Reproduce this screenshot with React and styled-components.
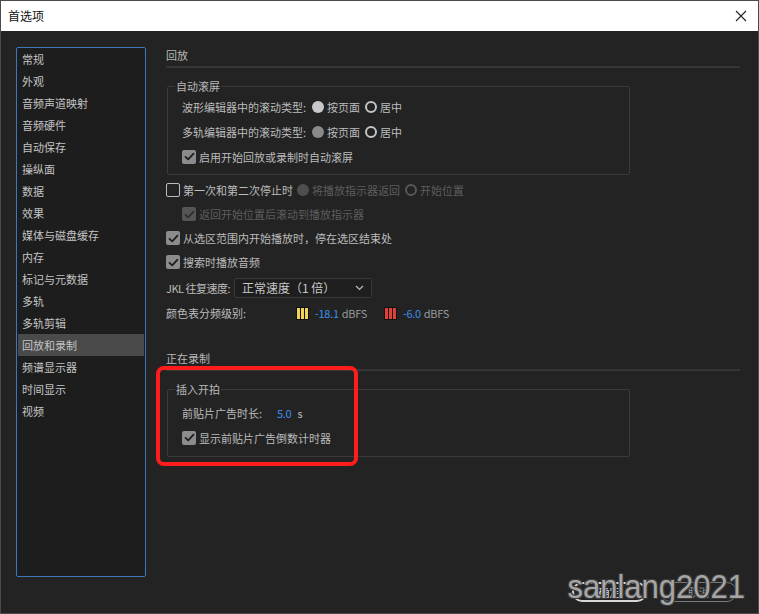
import styled, { createGlobalStyle } from "styled-components";

const GlobalStyle = createGlobalStyle`
  html, body {
    margin: 0;
    padding: 0;
    background: #232323;
  }
  * {
    box-sizing: border-box;
  }
`;

const Window = styled.div`
  position: relative;
  width: 759px;
  height: 614px;
  background: #232323;
  border: 1px solid #4a4a4a;
  display: flex;
  flex-direction: column;
  font-family: "Noto Sans CJK SC", "Microsoft YaHei", sans-serif;
  font-size: 11px;
  line-height: 16px;
  color: #bcbcbc;
  overflow: hidden;
`;

const TitleBar = styled.div`
  height: 30px;
  background: #ffffff;
  display: flex;
  align-items: center;
  justify-content: space-between;
  padding: 0 11px 0 7px;
  color: #111;
  font-size: 12px;
`;

const Main = styled.div`
  display: flex;
  gap: 20px;
  padding: 16px 0 0 15px;
`;

const Sidebar = styled.ul`
  list-style: none;
  margin: 0;
  padding: 0 1px;
  width: 130px;
  height: 530px;
  background: #1d1d1d;
  border: 1px solid #3f78b8;
  border-radius: 2px;
`;

const NavItem = styled.li`
  height: 22px;
  line-height: 22px;
  padding-left: 4px;
  color: #c4c4c4;
  background: ${(p) => (p.$active ? "#4a4a4a" : "transparent")};
`;

const Content = styled.div`
  width: 574px;
  display: flex;
  flex-direction: column;
`;

const SectionTitle = styled.div`
  color: #b8b8b8;
  margin-top: ${(p) => p.$top || 0}px;
`;

const Divider = styled.div`
  height: 2px;
  margin-top: 3px;
  background: #363636;
`;

const Group = styled.fieldset`
  margin: 10px 0 0 1px;
  width: 463px;
  padding: ${(p) => p.$pad || "0 0 5px 14px"};
  border: 1px solid #3a3a3a;
  border-radius: 2px;
`;

const Legend = styled.legend`
  margin-left: -7px;
  padding: 0 1px;
  color: #b8b8b8;
  line-height: 16px;
`;

const Row = styled.div`
  display: flex;
  align-items: center;
  height: ${(p) => p.$h || 24}px;
  padding-left: ${(p) => p.$indent || 0}px;
  color: ${(p) => (p.$disabled ? "#5e5e5e" : "#bcbcbc")};
`;

const Label = styled.span`
  flex: none;
  width: ${(p) => (p.$w ? `${p.$w}px` : "auto")};
  margin-right: ${(p) => p.$gap ?? 6}px;
  white-space: nowrap;
  letter-spacing: ${(p) => (p.$tight ? "-0.5px" : "normal")};
  color: ${(p) => (p.$dim ? "#5e5e5e" : "inherit")};
`;

const Radio = styled.span`
  width: 12px;
  height: 12px;
  border-radius: 50%;
  margin-right: 3px;
  flex: none;
  background: ${(p) => (p.$on ? p.$tone || "#c8c8c8" : "transparent")};
  border: ${(p) => (p.$on ? "none" : `2px solid ${p.$tone || "#c4c4c4"}`)};
`;

const OptText = styled.span`
  margin-right: 5px;
  color: ${(p) => (p.$dim ? "#5e5e5e" : "inherit")};
`;

const Box = styled.span`
  width: 14px;
  height: 14px;
  flex: none;
  margin-right: 3px;
  border-radius: 2px;
  display: flex;
  align-items: center;
  justify-content: center;
  background: ${(p) =>
    p.$checked ? (p.$disabled ? "#555555" : "#8c8c8c") : "transparent"};
  border: ${(p) => (p.$checked ? "none" : "1.5px solid #bdbdbd")};
`;

const Select = styled.div`
  width: 138px;
  height: 20px;
  margin-left: 4px;
  padding: 0 7px;
  display: flex;
  align-items: center;
  justify-content: space-between;
  background: #1e1e1e;
  border: 1px solid #383838;
  border-radius: 2px;
  color: #c8c8c8;
  font-size: 12px;
`;

const Meter = styled.span`
  display: flex;
  width: 13px;
  height: 13px;
  margin: 0 6px 0 ${(p) => p.$left}px;
  border: 1px solid #111;
  background: #111;
  gap: 1px;
  span {
    flex: 1;
    background: ${(p) => p.$color};
  }
`;

const Value = styled.span`
  color: #3b8eea;
  letter-spacing: -0.3px;
  margin-right: ${(p) => p.$gap || 3}px;
`;

const Unit = styled.span`
  color: #9a9a9a;
  letter-spacing: -0.3px;
`;

const Footer = styled.div`
  display: flex;
  justify-content: flex-end;
  gap: 13px;
  padding: 5px 21px 0 0;
`;

const Button = styled.div`
  width: ${(p) => p.$w}px;
  height: 20px;
  border-radius: 10px;
  display: flex;
  align-items: center;
  justify-content: center;
  font-size: 11px;
  color: ${(p) => (p.$primary ? "#e0e4ff" : "#9a9a9a")};
  border: ${(p) => (p.$primary ? "2px solid #d6d6d6" : "1px solid #7a7a7a")};
`;

const Highlight = styled.div`
  position: absolute;
  left: 155px;
  top: 365px;
  width: 202px;
  height: 100px;
  border: 4px solid #ff1c1c;
  border-radius: 8px;
  pointer-events: none;
`;

const Watermark = styled.div`
  position: absolute;
  right: 13px;
  bottom: 11px;
  font-family: "Liberation Sans", Arial, sans-serif;
  font-size: 31px;
  line-height: 31px;
  color: #a6a6a6;
  transform: scaleY(1.1);
  text-shadow: 1px 1px 0 #3a3a3a, -1px -1px 0 #3a3a3a, 1px -1px 0 #3a3a3a,
    -1px 1px 0 #3a3a3a;
  pointer-events: none;
`;

function Check({ color = "#1f1f1f" }) {
  return (
    <svg width="11" height="11" viewBox="0 0 11 11">
      <path
        d="M1.5 5.8 L4.2 8.4 L9.5 2.6"
        fill="none"
        stroke={color}
        strokeWidth="1.8"
        strokeLinecap="round"
        strokeLinejoin="round"
      />
    </svg>
  );
}

function Checkbox({ checked, disabled }) {
  return (
    <Box $checked={checked} $disabled={disabled}>
      {checked && <Check color={disabled ? "#2e2e2e" : "#1f1f1f"} />}
    </Box>
  );
}

const navItems = [
  "常规",
  "外观",
  "音频声道映射",
  "音频硬件",
  "自动保存",
  "操纵面",
  "数据",
  "效果",
  "媒体与磁盘缓存",
  "内存",
  "标记与元数据",
  "多轨",
  "多轨剪辑",
  "回放和录制",
  "频谱显示器",
  "时间显示",
  "视频",
];

export default function App() {
  return (
    <>
      <GlobalStyle />
      <Window>
        <TitleBar>
          <span>首选项</span>
          <svg width="12" height="12" viewBox="0 0 12 12">
            <path d="M1 1 L11 11 M11 1 L1 11" stroke="#222" strokeWidth="1.1" />
          </svg>
        </TitleBar>
        <Main>
          <Sidebar>
            {navItems.map((item) => (
              <NavItem key={item} $active={item === "回放和录制"}>
                {item}
              </NavItem>
            ))}
          </Sidebar>
          <Content>
            <SectionTitle>回放</SectionTitle>
            <Divider />
            <Group>
              <Legend>自动滚屏</Legend>
              <Row $h={25}>
                <Label>波形编辑器中的滚动类型:</Label>
                <Radio $on />
                <OptText>按页面</OptText>
                <Radio />
                <OptText>居中</OptText>
              </Row>
              <Row $h={25}>
                <Label>多轨编辑器中的滚动类型:</Label>
                <Radio $on $tone="#8a8a8a" />
                <OptText>按页面</OptText>
                <Radio />
                <OptText>居中</OptText>
              </Row>
              <Row $h={25}>
                <Checkbox checked />
                <span>启用开始回放或录制时自动滚屏</span>
              </Row>
            </Group>
            <Row style={{ marginTop: 3 }}>
              <Checkbox />
              <Label $gap={4}>第一次和第二次停止时</Label>
              <Radio $on $tone="#4e4e4e" />
              <OptText $dim>将播放指示器返回</OptText>
              <Radio $tone="#585858" />
              <OptText $dim>开始位置</OptText>
            </Row>
            <Row $indent={16} $disabled>
              <Checkbox checked disabled />
              <span>返回开始位置后滚动到播放指示器</span>
            </Row>
            <Row>
              <Checkbox checked />
              <span>从选区范围内开始播放时，停在选区结束处</span>
            </Row>
            <Row>
              <Checkbox checked />
              <span>搜索时播放音频</span>
            </Row>
            <Row $h={28}>
              <Label $tight $gap={0}>JKL 往复速度:</Label>
              <Select>
                <span>正常速度（1 倍）</span>
                <svg width="9" height="6" viewBox="0 0 9 6">
                  <path d="M1 1 L4.5 4.5 L8 1" fill="none" stroke="#bbb" strokeWidth="1.2" />
                </svg>
              </Select>
            </Row>
            <Row $h={22}>
              <Label $w={130} $gap={0}>颜色表分频级别:</Label>
              <Meter $left={0} $color="#f2d35a">
                <span />
                <span />
                <span />
              </Meter>
              <Value>-18.1</Value>
              <Unit>dBFS</Unit>
              <Meter $left={17} $color="#e2403c">
                <span />
                <span />
                <span />
              </Meter>
              <Value>-6.0</Value>
              <Unit>dBFS</Unit>
            </Row>
            <SectionTitle $top={26}>正在录制</SectionTitle>
            <Divider />
            <Group $pad="3px 0 6px 14px">
              <Legend>插入开拍</Legend>
              <Row $h={25}>
                <Label $w={95} $gap={0}>前贴片广告时长:</Label>
                <Value $gap={6}>5.0</Value>
                <span>s</span>
              </Row>
              <Row $h={25}>
                <Checkbox checked />
                <span>显示前贴片广告倒数计时器</span>
              </Row>
            </Group>
          </Content>
        </Main>
        <Footer>
          <Button $primary $w={75}>
            确定
          </Button>
          <Button $w={77}>取消</Button>
        </Footer>
        <Highlight />
        <Watermark>sanlang2021</Watermark>
      </Window>
    </>
  );
}
